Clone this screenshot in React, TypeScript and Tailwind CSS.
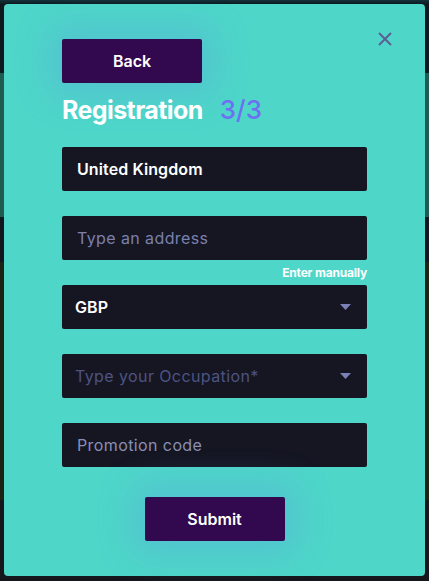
import React from "react";

const font = { fontFamily: "Inter, 'Noto Sans', sans-serif" };

function Caret() {
  return (
    <svg width="11" height="6" viewBox="0 0 11 6" className="shrink-0">
      <path d="M0 0 H11 L5.5 6 Z" fill="#7b80b6" />
    </svg>
  );
}

function Field({ value, placeholder, tone = "text-[#7a7fad]", select = false, padX = "pl-[15px]" }: {
  value?: string;
  placeholder?: string;
  tone?: string;
  select?: boolean;
  padX?: string;
}) {
  return (
    <div className={`h-[44px] w-[305px] bg-[#151622] rounded-[2px] flex items-center justify-between ${padX} pr-[16px]`}>
      {value ? (
        <span className="text-[16px] font-semibold text-white tracking-[0.1px]">{value}</span>
      ) : (
        <span className={`text-[16px] tracking-[0.4px] ${tone}`}>{placeholder}</span>
      )}
      {select && <Caret />}
    </div>
  );
}

export default function App() {
  return (
    <div
      style={font}
      className="w-[429px] h-[581px] p-[4px] bg-[linear-gradient(to_bottom,#14343c_0,#0c1a20_4px,#0c1a20_73px,#1f5b51_73px,#1f5b51_217px,#12161e_217px,#12161e_262px,#1c2413_262px,#1c2413_500px,#16171d_500px)]"
    >
      <div className="relative h-[572px] rounded-[4px] bg-[#4ed6c9] pl-[58px] pt-[35px]">
        <button className="absolute right-[33px] top-[28px]" aria-label="Close">
          <svg width="14" height="14" viewBox="0 0 14 14">
            <path d="M1 1 L13 13 M13 1 L1 13" stroke="#5b6094" strokeWidth="2" />
          </svg>
        </button>

        <button className="h-[44px] w-[140px] rounded-[2px] bg-[#32084f] text-white text-[16px] font-semibold shadow-[0_0_36px_10px_rgba(95,150,225,0.33)]">
          Back
        </button>

        <h2 className="mt-[9px] h-[36px] flex items-center gap-[17px] text-[25px] font-bold leading-none tracking-[-0.6px]">
          <span className="text-white">Registration</span>
          <span className="text-[#6d70f2] font-medium text-[26px] tracking-[0px]">3/3</span>
        </h2>

        <div className="mt-[19px] flex flex-col">
          <Field value="United Kingdom" />
          <div className="mt-[25px]">
            <Field placeholder="Type an address" tone="text-[#7b80ad]" />
          </div>
          <div className="w-[305px] h-[25px] flex justify-end items-center">
            <span className="text-[12px] font-bold text-white tracking-[-0.2px]">Enter manually</span>
          </div>
          <Field value="GBP" select padX="pl-[13px]" />
          <div className="mt-[25px]">
            <Field placeholder="Type your Occupation*" tone="text-[#4d5382]" select padX="pl-[13px]" />
          </div>
          <div className="mt-[25px]">
            <Field placeholder="Promotion code" tone="text-[#8a8eb5]" />
          </div>
        </div>

        <div className="w-[305px] flex justify-center mt-[30px]">
          <button className="h-[44px] w-[140px] rounded-[2px] bg-[#32084f] text-white text-[16px] font-semibold shadow-[0_0_36px_10px_rgba(95,150,225,0.33)]">
            Submit
          </button>
        </div>
      </div>
    </div>
  );
}
